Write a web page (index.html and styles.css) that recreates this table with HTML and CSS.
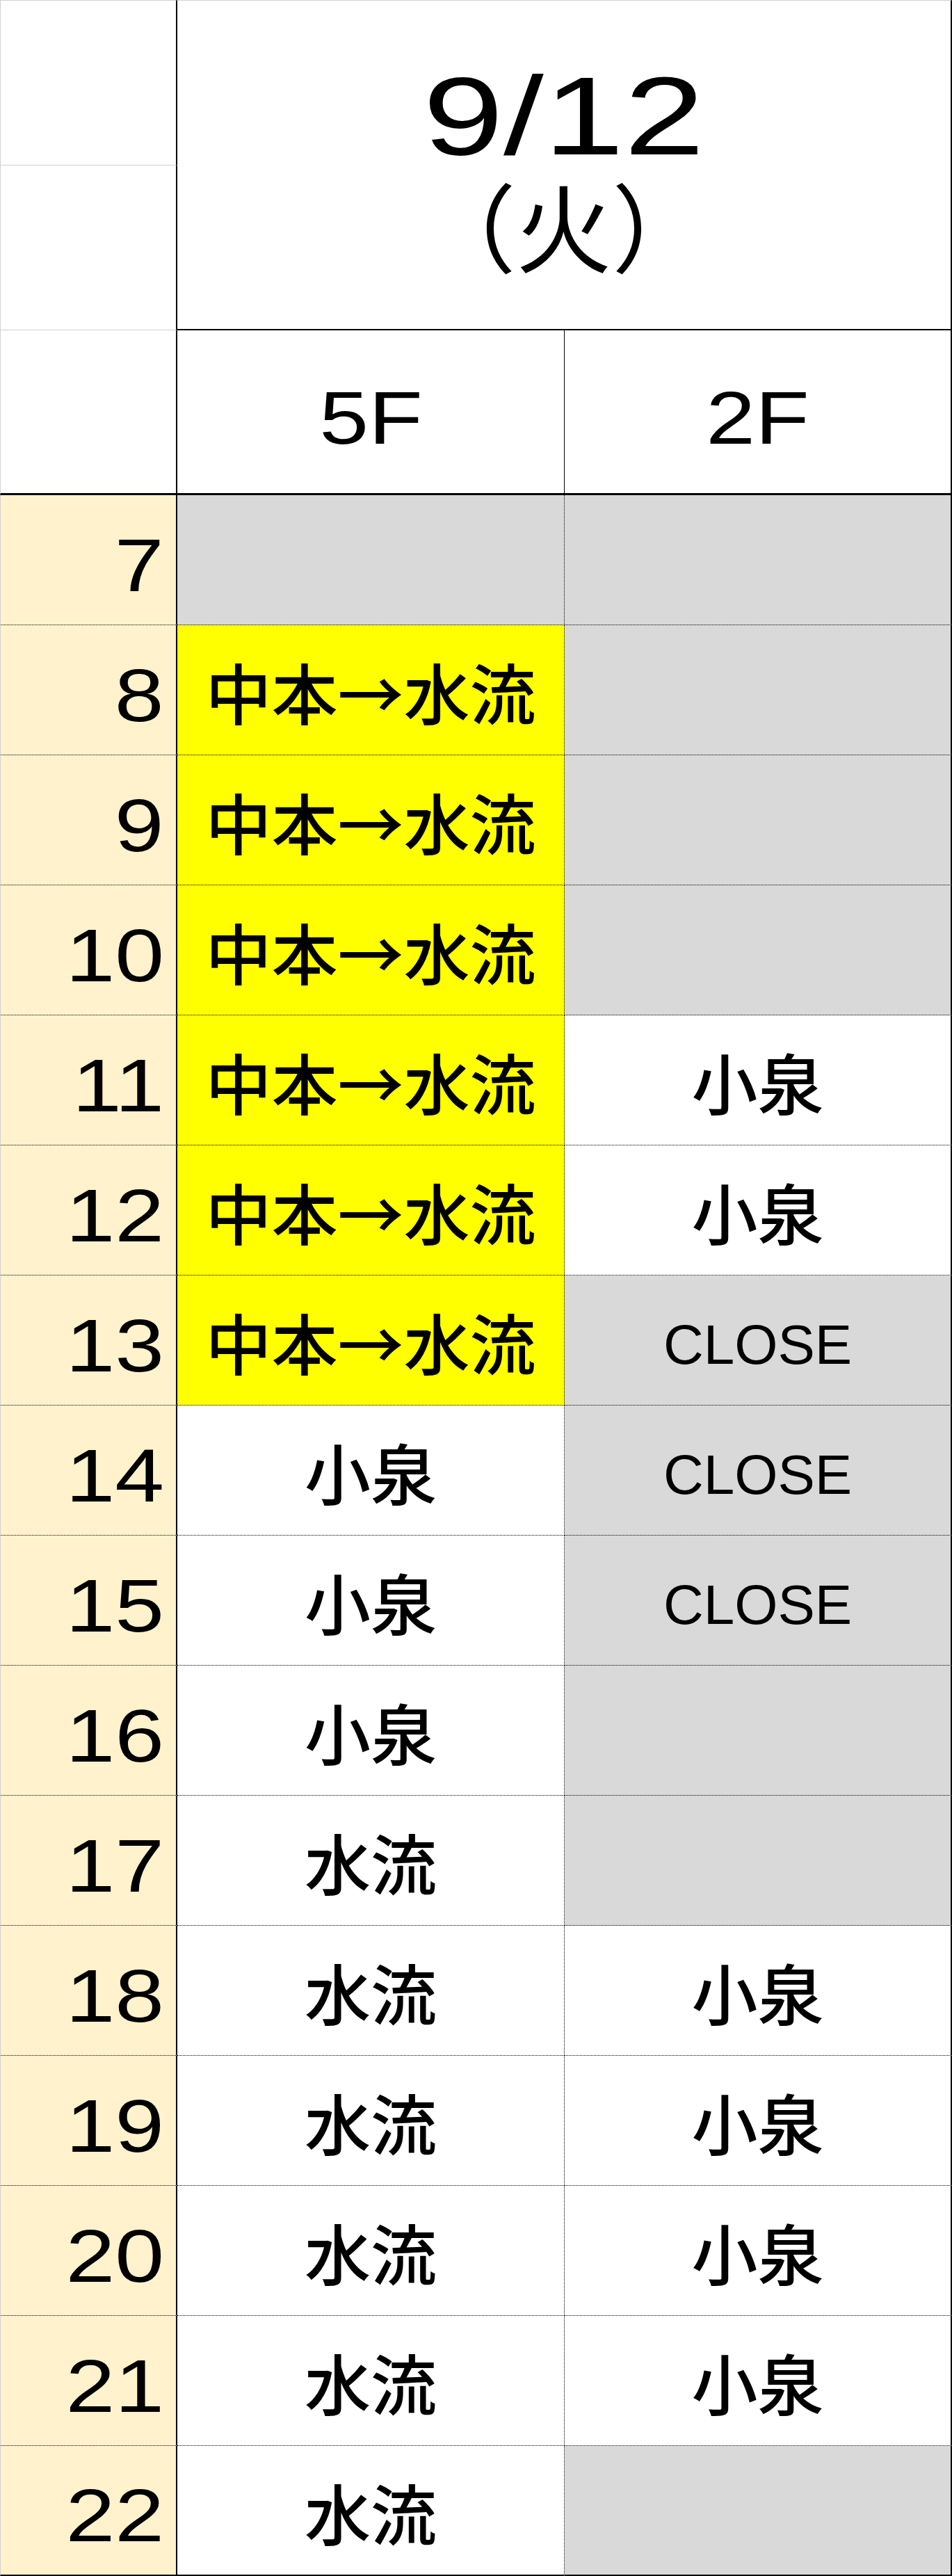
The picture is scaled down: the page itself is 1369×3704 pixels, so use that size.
FILE: index.html
```html
<!DOCTYPE html>
<html lang="ja">
<head>
<meta charset="utf-8">
<title>9/12 (火)</title>
<link rel="stylesheet" href="styles.css">
</head>
<body>
<div class="sheet">
  <div class="corner r1"></div>
  <div class="date">
    <div class="date-num"><span class="wide">9/12</span></div>
    <div class="date-day">（火）</div>
  </div>
  <div class="corner r2"></div>
  <div class="corner r3"></div>
  <div class="floor f5"><span class="wide">5F</span></div>
  <div class="floor f2"><span class="wide">2F</span></div>

  <div class="hour"><span class="wide">7</span></div>
  <div class="slot c5 off"></div>
  <div class="slot c2 off"></div>

  <div class="hour"><span class="wide">8</span></div>
  <div class="slot c5 hl">中本→水流</div>
  <div class="slot c2 off"></div>

  <div class="hour"><span class="wide">9</span></div>
  <div class="slot c5 hl">中本→水流</div>
  <div class="slot c2 off"></div>

  <div class="hour"><span class="wide">10</span></div>
  <div class="slot c5 hl">中本→水流</div>
  <div class="slot c2 off"></div>

  <div class="hour"><span class="wide">11</span></div>
  <div class="slot c5 hl">中本→水流</div>
  <div class="slot c2">小泉</div>

  <div class="hour"><span class="wide">12</span></div>
  <div class="slot c5 hl">中本→水流</div>
  <div class="slot c2">小泉</div>

  <div class="hour"><span class="wide">13</span></div>
  <div class="slot c5 hl">中本→水流</div>
  <div class="slot c2 off closed">CLOSE</div>

  <div class="hour"><span class="wide">14</span></div>
  <div class="slot c5">小泉</div>
  <div class="slot c2 off closed">CLOSE</div>

  <div class="hour"><span class="wide">15</span></div>
  <div class="slot c5">小泉</div>
  <div class="slot c2 off closed">CLOSE</div>

  <div class="hour"><span class="wide">16</span></div>
  <div class="slot c5">小泉</div>
  <div class="slot c2 off"></div>

  <div class="hour"><span class="wide">17</span></div>
  <div class="slot c5">水流</div>
  <div class="slot c2 off"></div>

  <div class="hour"><span class="wide">18</span></div>
  <div class="slot c5">水流</div>
  <div class="slot c2">小泉</div>

  <div class="hour"><span class="wide">19</span></div>
  <div class="slot c5">水流</div>
  <div class="slot c2">小泉</div>

  <div class="hour"><span class="wide">20</span></div>
  <div class="slot c5">水流</div>
  <div class="slot c2">小泉</div>

  <div class="hour"><span class="wide">21</span></div>
  <div class="slot c5">水流</div>
  <div class="slot c2">小泉</div>

  <div class="hour last"><span class="wide">22</span></div>
  <div class="slot c5 last">水流</div>
  <div class="slot c2 off last"></div>
</div>
</body>
</html>
```

FILE: styles.css
```css
* {
  box-sizing: border-box;
}

html, body {
  margin: 0;
  padding: 0;
  background: #ffffff;
}

.sheet {
  display: grid;
  grid-template-columns: 255px 557px 557px;
  grid-template-rows: 238px 237px 237px repeat(16, 187px);
  width: 1369px;
  color: #000000;
}

.wide {
  display: inline-block;
  transform: scaleX(1.19);
}

/* header, left corner */
.corner {
  grid-column: 1;
  border-left: 1px solid #d0d0d0;
  border-right: 2px solid #000000;
  border-bottom: 1px solid #d0d0d0;
}
.corner.r1 {
  grid-row: 1;
  border-top: 1px solid #d0d0d0;
}
.corner.r2 {
  grid-row: 2;
}
.corner.r3 {
  grid-row: 3;
  border-bottom: 3px solid #000000;
}

/* date header */
.date {
  grid-column: 2 / 4;
  grid-row: 1 / 3;
  border-top: 1px solid #d0d0d0;
  border-right: 2px solid #000000;
  border-bottom: 2px solid #000000;
  padding-top: 86px;
  text-align: center;
}
.date-num {
  font-family: "Liberation Sans", Arial, sans-serif;
  font-size: 160px;
  line-height: 160px;
}
.date-num .wide {
  transform: scaleX(1.3);
}
.date-day {
  margin-top: 5px;
  font-family: "Noto Sans CJK JP", sans-serif;
  font-size: 138px;
  line-height: 1;
  font-weight: 400;
}

/* floor header */
.floor {
  grid-row: 3;
  display: flex;
  align-items: center;
  justify-content: center;
  padding-top: 18px;
  border-bottom: 3px solid #000000;
  font-family: "Liberation Sans", Arial, sans-serif;
  font-size: 107px;
  line-height: 1;
}
.floor.f5 {
  border-right: 1px solid #000000;
}
.floor.f2 {
  border-right: 2px solid #000000;
}

/* hour column */
.hour {
  grid-column: 1;
  display: flex;
  align-items: center;
  justify-content: flex-end;
  padding-right: 17px;
  padding-top: 16px;
  background: #fff2cc;
  border-left: 1px solid #d0d0d0;
  border-right: 2px solid #000000;
  border-bottom: 1px dotted #000000;
  font-family: "Liberation Sans", Arial, sans-serif;
  font-size: 107px;
  line-height: 1;
}
.hour .wide {
  transform-origin: right center;
}

/* schedule slots */
.slot {
  display: flex;
  align-items: center;
  justify-content: center;
  padding-top: 3px;
  background: #ffffff;
  border-bottom: 1px dotted #000000;
  font-family: "Noto Sans CJK JP", sans-serif;
  font-size: 95px;
  font-weight: 500;
  line-height: 1;
  white-space: nowrap;
}
.slot.c5 {
  border-right: 1px dotted #000000;
}
.slot.c2 {
  border-right: 2px solid #000000;
}
.slot.off {
  background: #d9d9d9;
}
.slot.hl {
  background: #ffff00;
}
.slot.closed {
  padding-top: 14px;
  font-family: "Liberation Sans", Arial, sans-serif;
  font-size: 80px;
  font-weight: 400;
}

.last {
  border-bottom: 2px solid #000000;
}
.hour.last {
  border-bottom: 2px solid #000000;
}
```
